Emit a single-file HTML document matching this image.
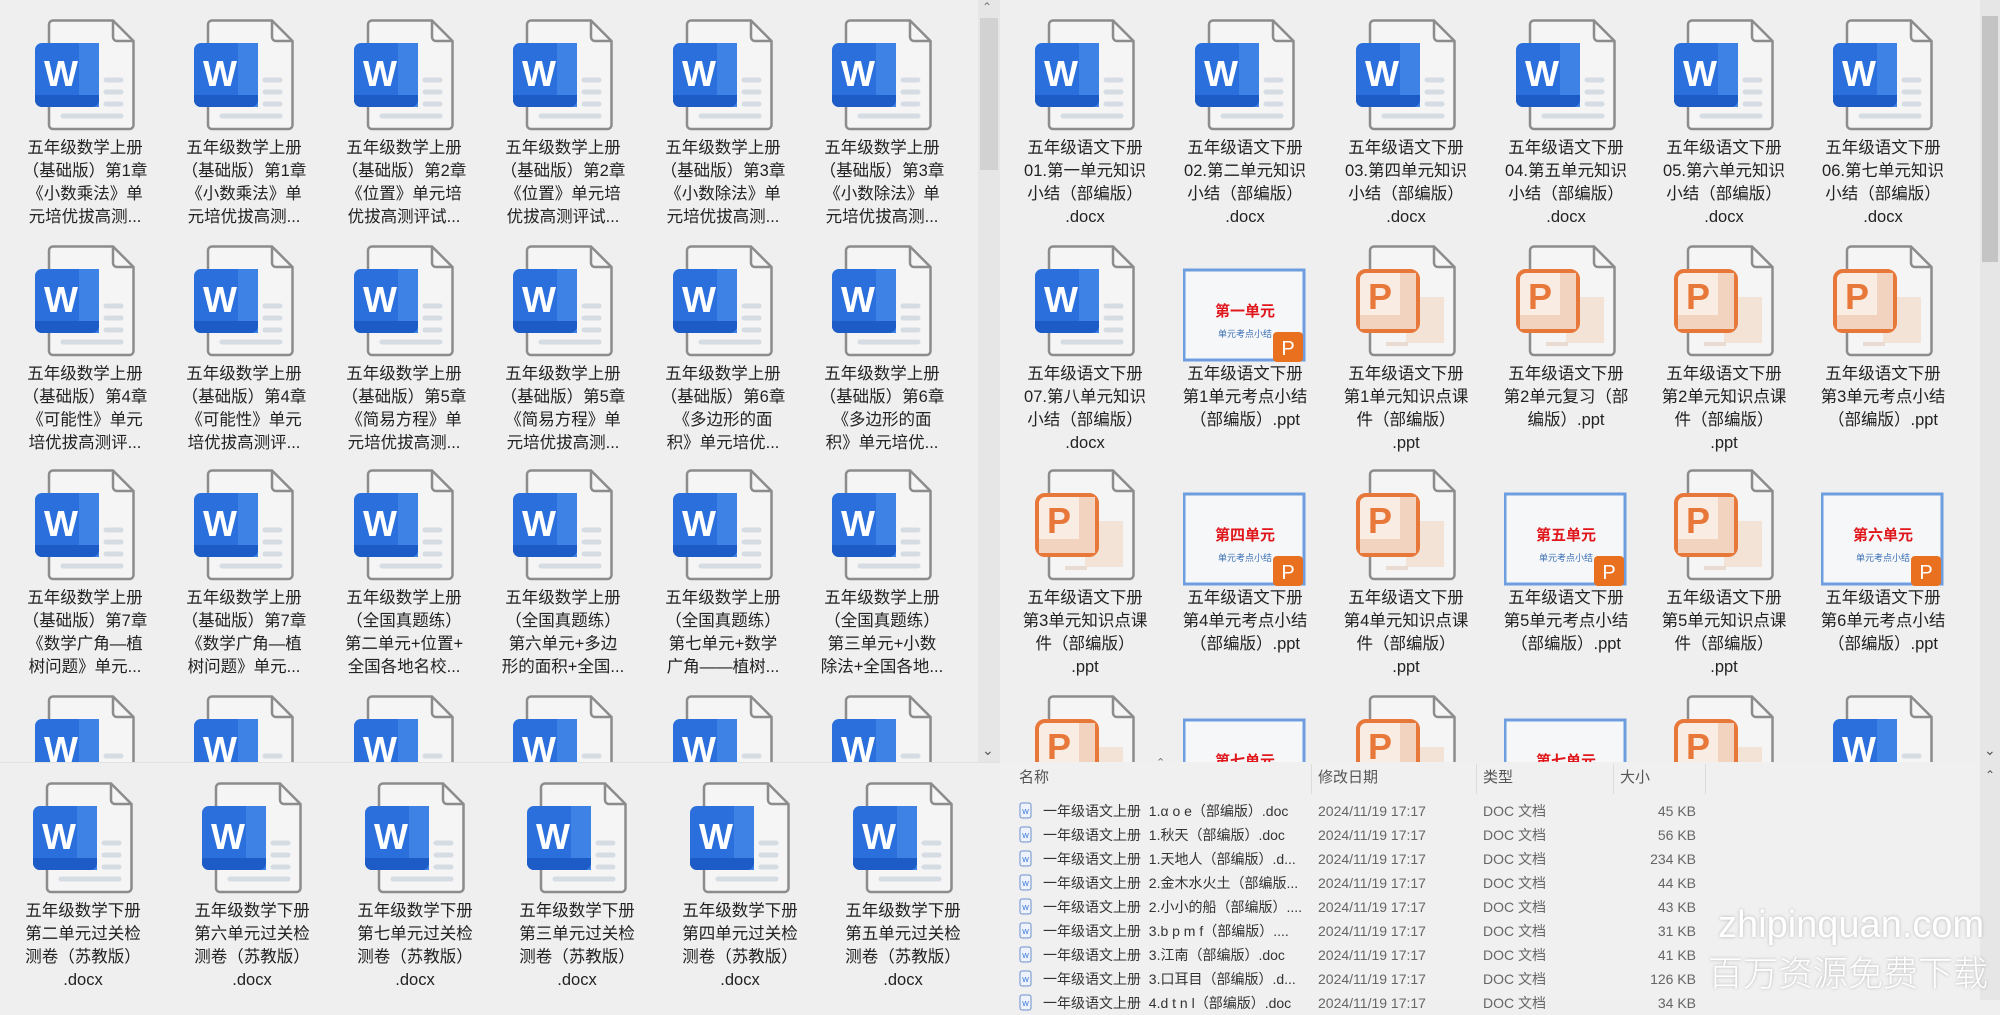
<!DOCTYPE html>
<html><head><meta charset="utf-8">
<style>
*{margin:0;padding:0;box-sizing:border-box}
body{width:2000px;height:1000px;background:#efefef;position:relative;overflow:hidden;font-family:"Liberation Sans","Noto Sans CJK SC",sans-serif;color:#222}
.pan{position:absolute;overflow:hidden;background:#efefef}
.i{position:absolute;width:170px}
.i svg.ic{position:absolute;left:35px;top:18px;width:100px;height:112px}
.i svg.sl{position:absolute;left:23px;top:18px;width:124px;height:120px}
.i .t{position:absolute;left:0;top:136px;width:170px;text-align:center;font-size:16.5px;line-height:23px;color:#222;white-space:nowrap}
.sb{position:absolute;background:#e6e6e6}
.th{position:absolute;background:#cdcdcd}
.lh{position:absolute;font-size:15px;color:#555;top:766px}
.row{position:absolute;left:1000px;width:980px;height:24px;font-size:14px;line-height:24px;color:#333}
.row span{position:absolute;white-space:nowrap}
.row .d{left:318px;color:#666}
.row .y{left:483px;color:#666}
.row .s{right:284px;color:#666}
.row .n{left:43px}
.row svg{position:absolute;left:19px;top:3px}
.wm{position:absolute;color:#fff;text-shadow:0 0 3px rgba(0,0,0,.25);white-space:nowrap}
</style></head><body>
<svg width="0" height="0" style="position:absolute">
<defs>
<symbol id="pg" viewBox="0 0 100 112">
<path d="M18,1.5H78L98.5,22V106a4,4 0 0 1-4,4H18a4,4 0 0 1-4-4V5.5a4,4 0 0 1 4-4z" fill="#f5f5f5" stroke="#8c8c8c" stroke-width="2.5"/>
<path d="M78,1.5V18a4,4 0 0 0 4,4H98.5" fill="none" stroke="#8c8c8c" stroke-width="2.5"/>
</symbol>
<symbol id="w" viewBox="0 0 100 112">
<use href="#pg"/>
<g stroke="#d6dce4" stroke-width="5" stroke-linecap="round"><line x1="71" y1="61" x2="86" y2="61"/><line x1="71" y1="73" x2="86" y2="73"/><line x1="71" y1="85" x2="86" y2="85"/><line x1="28" y1="97" x2="86" y2="97"/></g>
<rect x="0" y="24" width="64" height="64" rx="7" fill="#2a6fdb"/>
<rect x="44" y="24" width="20" height="64" fill="#3f82e6"/>
<path d="M0,76H64V81a7,7 0 0 1-7,7H7a7,7 0 0 1-7-7z" fill="#1d5bc7"/>
<text x="26" y="67" font-family="Liberation Sans" font-weight="bold" font-size="36" fill="#fff" text-anchor="middle">W</text>
</symbol>
<symbol id="p" viewBox="0 0 100 112">
<use href="#pg"/>
<rect x="50" y="52" width="38" height="46" fill="#f3e2d6"/>
<rect x="30" y="97" width="22" height="4" fill="#eadbd2"/>
<rect x="2" y="26" width="60" height="60" rx="8" fill="#f9ece3" stroke="#e8773a" stroke-width="4"/>
<rect x="44" y="28" width="16" height="56" fill="#f2d3c0"/>
<rect x="4" y="70" width="56" height="14" fill="#f2d3c0"/>
<text x="24" y="64" font-family="Liberation Sans" font-weight="bold" font-size="36" fill="#e8773a" text-anchor="middle">P</text>
</symbol>
<symbol id="sd" viewBox="-12 0 124 120">
<rect x="-11" y="25" width="120" height="90" fill="#f6f7f8" stroke="#6d9fe0" stroke-width="3"/>
<rect x="78" y="87" width="30" height="30" rx="4" fill="#e8701e"/>
<text x="93" y="110" font-family="Liberation Sans" font-size="20" fill="#fff" text-anchor="middle">P</text>
</symbol>
<symbol id="sm" viewBox="0 0 14 18"><rect x="1" y="1" width="11" height="15" rx="2" fill="#eef3fb" stroke="#6a8fcc"/><text x="6.5" y="12" font-size="7" font-family="Liberation Sans" fill="#2a6fdb" text-anchor="middle">W</text></symbol>
</defs></svg>

<!-- LEFT TOP PANEL -->
<div class="pan" style="left:0;top:0;width:978px;height:762px">
<div class="i" style="left:0px;top:1px"><svg class="ic"><use href="#w"/></svg><div class="t">五年级数学上册<br>（基础版）第1章<br>《小数乘法》单<br>元培优拔高测...</div></div>
<div class="i" style="left:159px;top:1px"><svg class="ic"><use href="#w"/></svg><div class="t">五年级数学上册<br>（基础版）第1章<br>《小数乘法》单<br>元培优拔高测...</div></div>
<div class="i" style="left:319px;top:1px"><svg class="ic"><use href="#w"/></svg><div class="t">五年级数学上册<br>（基础版）第2章<br>《位置》单元培<br>优拔高测评试...</div></div>
<div class="i" style="left:478px;top:1px"><svg class="ic"><use href="#w"/></svg><div class="t">五年级数学上册<br>（基础版）第2章<br>《位置》单元培<br>优拔高测评试...</div></div>
<div class="i" style="left:638px;top:1px"><svg class="ic"><use href="#w"/></svg><div class="t">五年级数学上册<br>（基础版）第3章<br>《小数除法》单<br>元培优拔高测...</div></div>
<div class="i" style="left:797px;top:1px"><svg class="ic"><use href="#w"/></svg><div class="t">五年级数学上册<br>（基础版）第3章<br>《小数除法》单<br>元培优拔高测...</div></div>

<div class="i" style="left:0px;top:227px"><svg class="ic"><use href="#w"/></svg><div class="t">五年级数学上册<br>（基础版）第4章<br>《可能性》单元<br>培优拔高测评...</div></div>
<div class="i" style="left:159px;top:227px"><svg class="ic"><use href="#w"/></svg><div class="t">五年级数学上册<br>（基础版）第4章<br>《可能性》单元<br>培优拔高测评...</div></div>
<div class="i" style="left:319px;top:227px"><svg class="ic"><use href="#w"/></svg><div class="t">五年级数学上册<br>（基础版）第5章<br>《简易方程》单<br>元培优拔高测...</div></div>
<div class="i" style="left:478px;top:227px"><svg class="ic"><use href="#w"/></svg><div class="t">五年级数学上册<br>（基础版）第5章<br>《简易方程》单<br>元培优拔高测...</div></div>
<div class="i" style="left:638px;top:227px"><svg class="ic"><use href="#w"/></svg><div class="t">五年级数学上册<br>（基础版）第6章<br>《多边形的面<br>积》单元培优...</div></div>
<div class="i" style="left:797px;top:227px"><svg class="ic"><use href="#w"/></svg><div class="t">五年级数学上册<br>（基础版）第6章<br>《多边形的面<br>积》单元培优...</div></div>

<div class="i" style="left:0px;top:451px"><svg class="ic"><use href="#w"/></svg><div class="t">五年级数学上册<br>（基础版）第7章<br>《数学广角—植<br>树问题》单元...</div></div>
<div class="i" style="left:159px;top:451px"><svg class="ic"><use href="#w"/></svg><div class="t">五年级数学上册<br>（基础版）第7章<br>《数学广角—植<br>树问题》单元...</div></div>
<div class="i" style="left:319px;top:451px"><svg class="ic"><use href="#w"/></svg><div class="t">五年级数学上册<br>（全国真题练）<br>第二单元+位置+<br>全国各地名校...</div></div>
<div class="i" style="left:478px;top:451px"><svg class="ic"><use href="#w"/></svg><div class="t">五年级数学上册<br>（全国真题练）<br>第六单元+多边<br>形的面积+全国...</div></div>
<div class="i" style="left:638px;top:451px"><svg class="ic"><use href="#w"/></svg><div class="t">五年级数学上册<br>（全国真题练）<br>第七单元+数学<br>广角——植树...</div></div>
<div class="i" style="left:797px;top:451px"><svg class="ic"><use href="#w"/></svg><div class="t">五年级数学上册<br>（全国真题练）<br>第三单元+小数<br>除法+全国各地...</div></div>

<div class="i" style="left:0px;top:677px"><svg class="ic"><use href="#w"/></svg></div>
<div class="i" style="left:159px;top:677px"><svg class="ic"><use href="#w"/></svg></div>
<div class="i" style="left:319px;top:677px"><svg class="ic"><use href="#w"/></svg></div>
<div class="i" style="left:478px;top:677px"><svg class="ic"><use href="#w"/></svg></div>
<div class="i" style="left:638px;top:677px"><svg class="ic"><use href="#w"/></svg></div>
<div class="i" style="left:797px;top:677px"><svg class="ic"><use href="#w"/></svg></div>
</div>
<div class="sb" style="left:978px;top:0;width:22px;height:762px"></div>
<div class="th" style="left:980px;top:18px;width:18px;height:152px;background:#d2d2d2"></div>
<div style="position:absolute;left:982px;top:0;font-size:12px;color:#777">&#8963;</div>
<div style="position:absolute;left:982px;top:742px;font-size:14px;color:#555">&#8964;</div>

<!-- LEFT BOTTOM PANEL -->
<div class="pan" style="left:0;top:762px;width:1000px;height:238px;border-top:1px solid #e2e2e2">
<div class="i" style="left:-2px;top:1px"><svg class="ic"><use href="#w"/></svg><div class="t">五年级数学下册<br>第二单元过关检<br>测卷（苏教版）<br>.docx</div></div>
<div class="i" style="left:167px;top:1px"><svg class="ic"><use href="#w"/></svg><div class="t">五年级数学下册<br>第六单元过关检<br>测卷（苏教版）<br>.docx</div></div>
<div class="i" style="left:330px;top:1px"><svg class="ic"><use href="#w"/></svg><div class="t">五年级数学下册<br>第七单元过关检<br>测卷（苏教版）<br>.docx</div></div>
<div class="i" style="left:492px;top:1px"><svg class="ic"><use href="#w"/></svg><div class="t">五年级数学下册<br>第三单元过关检<br>测卷（苏教版）<br>.docx</div></div>
<div class="i" style="left:655px;top:1px"><svg class="ic"><use href="#w"/></svg><div class="t">五年级数学下册<br>第四单元过关检<br>测卷（苏教版）<br>.docx</div></div>
<div class="i" style="left:818px;top:1px"><svg class="ic"><use href="#w"/></svg><div class="t">五年级数学下册<br>第五单元过关检<br>测卷（苏教版）<br>.docx</div></div>
</div>

<!-- RIGHT TOP PANEL -->
<div class="pan" style="left:1000px;top:0;width:980px;height:762px">
<div class="i" style="left:0px;top:1px"><svg class="ic"><use href="#w"/></svg><div class="t">五年级语文下册<br>01.第一单元知识<br>小结（部编版）<br>.docx</div></div>
<div class="i" style="left:160px;top:1px"><svg class="ic"><use href="#w"/></svg><div class="t">五年级语文下册<br>02.第二单元知识<br>小结（部编版）<br>.docx</div></div>
<div class="i" style="left:321px;top:1px"><svg class="ic"><use href="#w"/></svg><div class="t">五年级语文下册<br>03.第四单元知识<br>小结（部编版）<br>.docx</div></div>
<div class="i" style="left:481px;top:1px"><svg class="ic"><use href="#w"/></svg><div class="t">五年级语文下册<br>04.第五单元知识<br>小结（部编版）<br>.docx</div></div>
<div class="i" style="left:639px;top:1px"><svg class="ic"><use href="#w"/></svg><div class="t">五年级语文下册<br>05.第六单元知识<br>小结（部编版）<br>.docx</div></div>
<div class="i" style="left:798px;top:1px"><svg class="ic"><use href="#w"/></svg><div class="t">五年级语文下册<br>06.第七单元知识<br>小结（部编版）<br>.docx</div></div>

<div class="i" style="left:0px;top:227px"><svg class="ic"><use href="#w"/></svg><div class="t">五年级语文下册<br>07.第八单元知识<br>小结（部编版）<br>.docx</div></div>
<div class="i" style="left:160px;top:227px"><svg class="sl" viewBox="-12 0 124 120"><use href="#sd" x="-12" y="0" width="124" height="120"/><text x="50" y="71" font-size="15" font-weight="bold" fill="#e0161b" text-anchor="middle" font-family="Noto Sans CJK SC">第一单元</text><text x="50" y="92" font-size="9" fill="#3a6fb5" text-anchor="middle" font-family="Noto Sans CJK SC">单元考点小结</text></svg><div class="t">五年级语文下册<br>第1单元考点小结<br>（部编版）.ppt</div></div>
<div class="i" style="left:321px;top:227px"><svg class="ic"><use href="#p"/></svg><div class="t">五年级语文下册<br>第1单元知识点课<br>件（部编版）<br>.ppt</div></div>
<div class="i" style="left:481px;top:227px"><svg class="ic"><use href="#p"/></svg><div class="t">五年级语文下册<br>第2单元复习（部<br>编版）.ppt</div></div>
<div class="i" style="left:639px;top:227px"><svg class="ic"><use href="#p"/></svg><div class="t">五年级语文下册<br>第2单元知识点课<br>件（部编版）<br>.ppt</div></div>
<div class="i" style="left:798px;top:227px"><svg class="ic"><use href="#p"/></svg><div class="t">五年级语文下册<br>第3单元考点小结<br>（部编版）.ppt</div></div>

<div class="i" style="left:0px;top:451px"><svg class="ic"><use href="#p"/></svg><div class="t">五年级语文下册<br>第3单元知识点课<br>件（部编版）<br>.ppt</div></div>
<div class="i" style="left:160px;top:451px"><svg class="sl" viewBox="-12 0 124 120"><use href="#sd" x="-12" y="0" width="124" height="120"/><text x="50" y="71" font-size="15" font-weight="bold" fill="#e0161b" text-anchor="middle" font-family="Noto Sans CJK SC">第四单元</text><text x="50" y="92" font-size="9" fill="#3a6fb5" text-anchor="middle" font-family="Noto Sans CJK SC">单元考点小结</text></svg><div class="t">五年级语文下册<br>第4单元考点小结<br>（部编版）.ppt</div></div>
<div class="i" style="left:321px;top:451px"><svg class="ic"><use href="#p"/></svg><div class="t">五年级语文下册<br>第4单元知识点课<br>件（部编版）<br>.ppt</div></div>
<div class="i" style="left:481px;top:451px"><svg class="sl" viewBox="-12 0 124 120"><use href="#sd" x="-12" y="0" width="124" height="120"/><text x="50" y="71" font-size="15" font-weight="bold" fill="#e0161b" text-anchor="middle" font-family="Noto Sans CJK SC">第五单元</text><text x="50" y="92" font-size="9" fill="#3a6fb5" text-anchor="middle" font-family="Noto Sans CJK SC">单元考点小结</text></svg><div class="t">五年级语文下册<br>第5单元考点小结<br>（部编版）.ppt</div></div>
<div class="i" style="left:639px;top:451px"><svg class="ic"><use href="#p"/></svg><div class="t">五年级语文下册<br>第5单元知识点课<br>件（部编版）<br>.ppt</div></div>
<div class="i" style="left:798px;top:451px"><svg class="sl" viewBox="-12 0 124 120"><use href="#sd" x="-12" y="0" width="124" height="120"/><text x="50" y="71" font-size="15" font-weight="bold" fill="#e0161b" text-anchor="middle" font-family="Noto Sans CJK SC">第六单元</text><text x="50" y="92" font-size="9" fill="#3a6fb5" text-anchor="middle" font-family="Noto Sans CJK SC">单元考点小结</text></svg><div class="t">五年级语文下册<br>第6单元考点小结<br>（部编版）.ppt</div></div>

<div class="i" style="left:0px;top:677px"><svg class="ic"><use href="#p"/></svg></div>
<div class="i" style="left:160px;top:677px"><svg class="sl" viewBox="-12 0 124 120"><use href="#sd" x="-12" y="0" width="124" height="120"/><text x="50" y="71" font-size="15" font-weight="bold" fill="#e0161b" text-anchor="middle" font-family="Noto Sans CJK SC">第七单元</text></svg></div>
<div class="i" style="left:321px;top:677px"><svg class="ic"><use href="#p"/></svg></div>
<div class="i" style="left:481px;top:677px"><svg class="sl" viewBox="-12 0 124 120"><use href="#sd" x="-12" y="0" width="124" height="120"/><text x="50" y="71" font-size="15" font-weight="bold" fill="#e0161b" text-anchor="middle" font-family="Noto Sans CJK SC">第七单元</text></svg></div>
<div class="i" style="left:639px;top:677px"><svg class="ic"><use href="#p"/></svg></div>
<div class="i" style="left:798px;top:677px"><svg class="ic"><use href="#w"/></svg></div>
</div>
<div class="sb" style="left:1980px;top:0;width:20px;height:762px"></div>
<div class="th" style="left:1982px;top:16px;width:16px;height:246px;background:#c4c4c4"></div>
<div style="position:absolute;left:1984px;top:742px;font-size:14px;color:#555">&#8964;</div>

<!-- LIST PANEL -->
<div class="pan" style="left:1000px;top:762px;width:980px;height:238px;background:#f0f0f0"></div>
<div class="sb" style="left:1980px;top:762px;width:20px;height:238px"></div>
<div style="position:absolute;left:1985px;top:768px;font-size:12px;color:#555">&#8963;</div>
<div style="position:absolute;left:1156px;top:756px;font-size:11px;color:#777">&#8963;</div>
<div class="lh" style="left:1019px">名称</div>
<div class="lh" style="left:1318px">修改日期</div>
<div class="lh" style="left:1483px">类型</div>
<div class="lh" style="left:1620px">大小</div>
<div style="position:absolute;left:1311px;top:764px;width:1px;height:30px;background:#dcdcdc"></div>
<div style="position:absolute;left:1476px;top:764px;width:1px;height:30px;background:#dcdcdc"></div>
<div style="position:absolute;left:1613px;top:764px;width:1px;height:30px;background:#dcdcdc"></div>
<div style="position:absolute;left:1705px;top:764px;width:1px;height:30px;background:#dcdcdc"></div>

<div class="row" style="top:799px"><svg width="14" height="18"><use href="#sm"/></svg><span class="n">一年级语文上册&nbsp;&nbsp;1.α o e（部编版）.doc</span><span class="d">2024/11/19 17:17</span><span class="y">DOC 文档</span><span class="s">45 KB</span></div>
<div class="row" style="top:823px"><svg width="14" height="18"><use href="#sm"/></svg><span class="n">一年级语文上册&nbsp;&nbsp;1.秋天（部编版）.doc</span><span class="d">2024/11/19 17:17</span><span class="y">DOC 文档</span><span class="s">56 KB</span></div>
<div class="row" style="top:847px"><svg width="14" height="18"><use href="#sm"/></svg><span class="n">一年级语文上册&nbsp;&nbsp;1.天地人（部编版）.d...</span><span class="d">2024/11/19 17:17</span><span class="y">DOC 文档</span><span class="s">234 KB</span></div>
<div class="row" style="top:871px"><svg width="14" height="18"><use href="#sm"/></svg><span class="n">一年级语文上册&nbsp;&nbsp;2.金木水火土（部编版...</span><span class="d">2024/11/19 17:17</span><span class="y">DOC 文档</span><span class="s">44 KB</span></div>
<div class="row" style="top:895px"><svg width="14" height="18"><use href="#sm"/></svg><span class="n">一年级语文上册&nbsp;&nbsp;2.小小的船（部编版）....</span><span class="d">2024/11/19 17:17</span><span class="y">DOC 文档</span><span class="s">43 KB</span></div>
<div class="row" style="top:919px"><svg width="14" height="18"><use href="#sm"/></svg><span class="n">一年级语文上册&nbsp;&nbsp;3.b p m f（部编版）....</span><span class="d">2024/11/19 17:17</span><span class="y">DOC 文档</span><span class="s">31 KB</span></div>
<div class="row" style="top:943px"><svg width="14" height="18"><use href="#sm"/></svg><span class="n">一年级语文上册&nbsp;&nbsp;3.江南（部编版）.doc</span><span class="d">2024/11/19 17:17</span><span class="y">DOC 文档</span><span class="s">41 KB</span></div>
<div class="row" style="top:967px"><svg width="14" height="18"><use href="#sm"/></svg><span class="n">一年级语文上册&nbsp;&nbsp;3.口耳目（部编版）.d...</span><span class="d">2024/11/19 17:17</span><span class="y">DOC 文档</span><span class="s">126 KB</span></div>
<div class="row" style="top:991px"><svg width="14" height="18"><use href="#sm"/></svg><span class="n">一年级语文上册&nbsp;&nbsp;4.d t n l（部编版）.doc</span><span class="d">2024/11/19 17:17</span><span class="y">DOC 文档</span><span class="s">34 KB</span></div>

<div class="wm" style="left:1718px;top:904px;font-size:38px;font-family:'Liberation Sans',sans-serif">zhipinquan.com</div>
<div class="wm" style="left:1708px;top:950px;font-size:35px;font-family:'Noto Sans CJK SC',sans-serif;font-weight:300;line-height:44px">百万资源免费下载</div>
</body></html>
